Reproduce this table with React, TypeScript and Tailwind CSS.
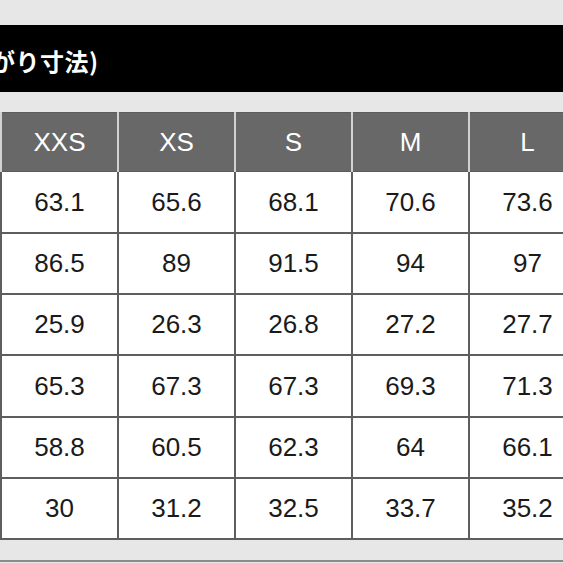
const sizes = ["XXS", "XS", "S", "M", "L"];

const rows = [
	{ h: "h-[62px]", values: ["63.1", "65.6", "68.1", "70.6", "73.6"] },
	{ h: "h-[61px]", values: ["86.5", "89", "91.5", "94", "97"] },
	{ h: "h-[61px]", values: ["25.9", "26.3", "26.8", "27.2", "27.7"] },
	{ h: "h-[62px]", values: ["65.3", "67.3", "67.3", "69.3", "71.3"] },
	{ h: "h-[61px]", values: ["58.8", "60.5", "62.3", "64", "66.1"] },
	{ h: "h-[61px]", values: ["30", "31.2", "32.5", "33.7", "35.2"] },
];

export default function App() {
	return (
		<div
			className="w-[563px] h-[563px] overflow-hidden bg-[#e7e7e7] flex flex-col"
			style={{ fontFamily: '"Liberation Sans", Arial, "Noto Sans CJK JP", sans-serif' }}
		>
			{/* タイトル帯 */}
			<div className="mt-[25px] h-[67px] bg-black flex items-center shrink-0">
				<span
					className="ml-[-58px] mt-[5px] text-white text-[24px] font-bold tracking-[0.5px] whitespace-nowrap"
					style={{ fontFamily: '"Noto Sans CJK JP", sans-serif' }}
				>
					仕上がり寸法)
				</span>
			</div>

			{/* サイズ表 */}
			<div className="mt-[20px] w-[590px] shrink-0">
				<div className="flex h-[60px] bg-[#d2d2d2]">
					{sizes.map((size) => (
						<div
							key={size}
							className="w-[115px] shrink-0 ml-[2px] bg-[#686868] border-y border-[#5c5c5c] flex items-center justify-center text-white text-[26px]"
						>
							{size}
						</div>
					))}
				</div>
				<div className="border-l-2 border-[#5e5e5e] bg-white">
					{rows.map((row, i) => (
						<div key={i} className={`flex ${row.h} border-b-2 border-[#5e5e5e]`}>
							{row.values.map((v, j) => (
								<div
									key={j}
									className="w-[117px] shrink-0 border-r-2 border-[#5e5e5e] flex items-center justify-center text-[#1a1a1a] text-[26px]"
								>
									{v}
								</div>
							))}
						</div>
					))}
				</div>
			</div>

			<div className="mt-[20px] h-[2px] bg-[#8a8a8a] shrink-0" />
		</div>
	);
}
